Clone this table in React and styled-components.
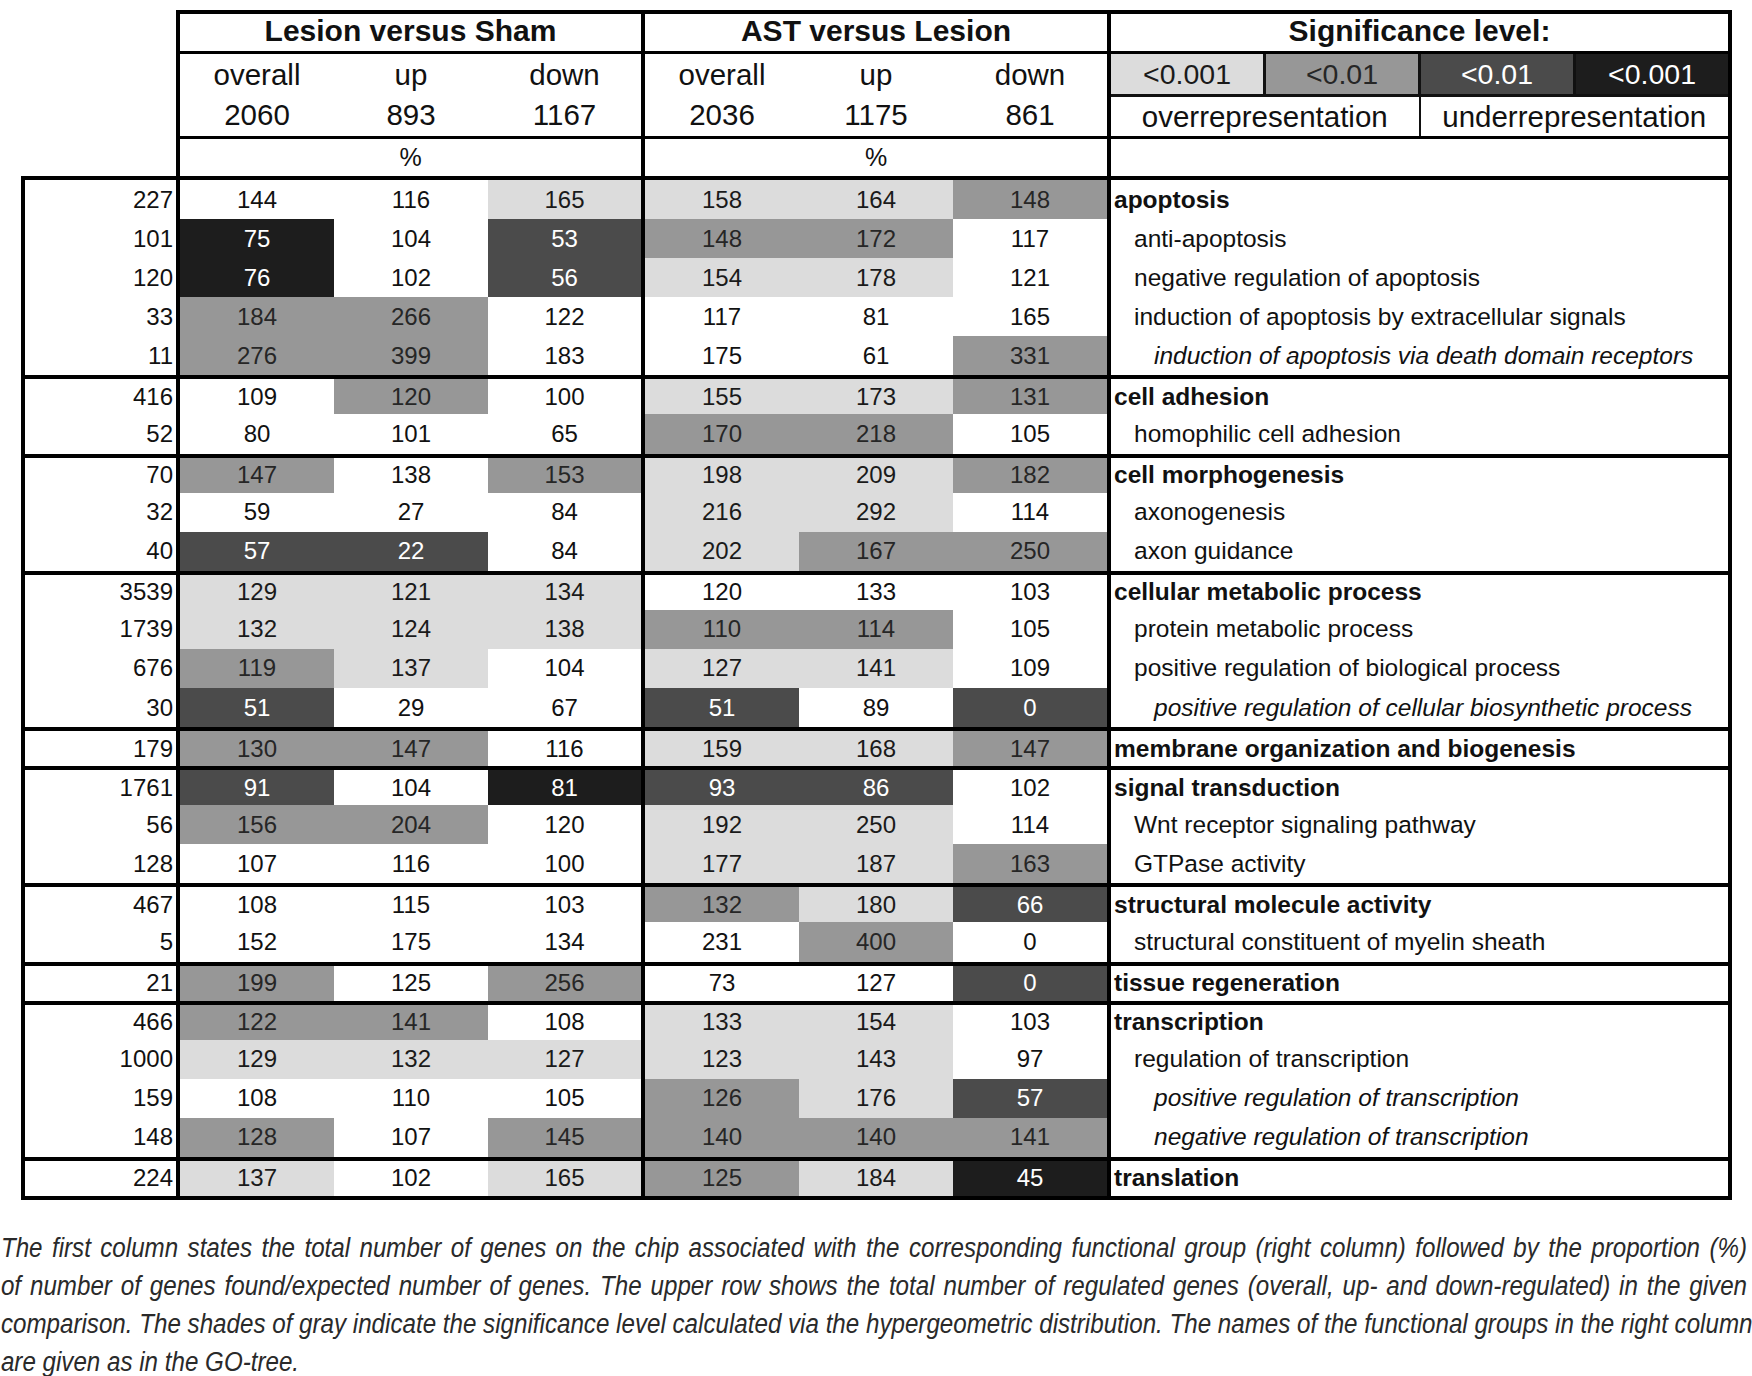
import React from 'react';
import styled, { createGlobalStyle, css } from 'styled-components';

const Global = createGlobalStyle`
  *, *::before, *::after { box-sizing: border-box; }
  html, body { margin: 0; padding: 0; background: #fff; }
  body { font-family: "Liberation Sans", Arial, sans-serif; color: #111; }
`;

const SHADE = {
  W: { bg: 'transparent', fg: '#111' },
  L: { bg: '#dcdcdc', fg: '#1a1a1a' },
  M: { bg: '#979797', fg: '#262626' },
  D: { bg: '#4b4b4b', fg: '#ffffff' },
  B: { bg: '#1d1d1d', fg: '#ffffff' },
};

const groups = [
  [
    [227, [144, 'W'], [116, 'W'], [165, 'L'], [158, 'L'], [164, 'L'], [148, 'M'], 'apoptosis', 0],
    [101, [75, 'B'], [104, 'W'], [53, 'D'], [148, 'M'], [172, 'M'], [117, 'W'], 'anti-apoptosis', 1],
    [120, [76, 'B'], [102, 'W'], [56, 'D'], [154, 'L'], [178, 'L'], [121, 'W'], 'negative regulation of apoptosis', 1],
    [33, [184, 'M'], [266, 'M'], [122, 'W'], [117, 'W'], [81, 'W'], [165, 'W'], 'induction of apoptosis by extracellular signals', 1],
    [11, [276, 'M'], [399, 'M'], [183, 'W'], [175, 'W'], [61, 'W'], [331, 'M'], 'induction of apoptosis via death domain receptors', 2],
  ],
  [
    [416, [109, 'W'], [120, 'M'], [100, 'W'], [155, 'L'], [173, 'L'], [131, 'M'], 'cell adhesion', 0],
    [52, [80, 'W'], [101, 'W'], [65, 'W'], [170, 'M'], [218, 'M'], [105, 'W'], 'homophilic cell adhesion', 1],
  ],
  [
    [70, [147, 'M'], [138, 'W'], [153, 'M'], [198, 'L'], [209, 'L'], [182, 'M'], 'cell morphogenesis', 0],
    [32, [59, 'W'], [27, 'W'], [84, 'W'], [216, 'L'], [292, 'L'], [114, 'W'], 'axonogenesis', 1],
    [40, [57, 'D'], [22, 'D'], [84, 'W'], [202, 'L'], [167, 'M'], [250, 'M'], 'axon guidance', 1],
  ],
  [
    [3539, [129, 'L'], [121, 'L'], [134, 'L'], [120, 'W'], [133, 'W'], [103, 'W'], 'cellular metabolic process', 0],
    [1739, [132, 'L'], [124, 'L'], [138, 'L'], [110, 'M'], [114, 'M'], [105, 'W'], 'protein metabolic process', 1],
    [676, [119, 'M'], [137, 'L'], [104, 'W'], [127, 'L'], [141, 'L'], [109, 'W'], 'positive regulation of biological process', 1],
    [30, [51, 'D'], [29, 'W'], [67, 'W'], [51, 'D'], [89, 'W'], [0, 'D'], 'positive regulation of cellular biosynthetic process', 2],
  ],
  [
    [179, [130, 'M'], [147, 'M'], [116, 'W'], [159, 'L'], [168, 'L'], [147, 'M'], 'membrane organization and biogenesis', 0],
  ],
  [
    [1761, [91, 'D'], [104, 'W'], [81, 'B'], [93, 'D'], [86, 'D'], [102, 'W'], 'signal transduction', 0],
    [56, [156, 'M'], [204, 'M'], [120, 'W'], [192, 'L'], [250, 'L'], [114, 'W'], 'Wnt receptor signaling pathway', 1],
    [128, [107, 'W'], [116, 'W'], [100, 'W'], [177, 'L'], [187, 'L'], [163, 'M'], 'GTPase activity', 1],
  ],
  [
    [467, [108, 'W'], [115, 'W'], [103, 'W'], [132, 'M'], [180, 'L'], [66, 'D'], 'structural molecule activity', 0],
    [5, [152, 'W'], [175, 'W'], [134, 'W'], [231, 'W'], [400, 'M'], [0, 'W'], 'structural constituent of myelin sheath', 1],
  ],
  [
    [21, [199, 'M'], [125, 'W'], [256, 'M'], [73, 'W'], [127, 'W'], [0, 'D'], 'tissue regeneration', 0],
  ],
  [
    [466, [122, 'M'], [141, 'M'], [108, 'W'], [133, 'L'], [154, 'L'], [103, 'W'], 'transcription', 0],
    [1000, [129, 'L'], [132, 'L'], [127, 'L'], [123, 'L'], [143, 'L'], [97, 'W'], 'regulation of transcription', 1],
    [159, [108, 'W'], [110, 'W'], [105, 'W'], [126, 'M'], [176, 'L'], [57, 'D'], 'positive regulation of transcription', 2],
    [148, [128, 'M'], [107, 'W'], [145, 'M'], [140, 'M'], [140, 'M'], [141, 'M'], 'negative regulation of transcription', 2],
  ],
  [
    [224, [137, 'L'], [102, 'W'], [165, 'L'], [125, 'M'], [184, 'L'], [45, 'B'], 'translation', 0],
  ],
];

const Page = styled.div`
  width: 1752px;
  height: 1376px;
  overflow: hidden;
  padding-top: 10px;
`;

/* ---------- header ---------- */
const Head = styled.div`
  margin-left: 176px;
  width: 1556px;
  border: 4px solid #000;
  border-bottom: none;
  display: flex;
`;

const Section = styled.div`
  width: ${(p) => p.$w}px;
  border-right: ${(p) => (p.$last ? 'none' : '4px solid #000')};
  display: flex;
  flex-direction: column;
`;

const TitleCell = styled.div`
  height: 40px;
  padding-bottom: 4px;
  border-bottom: 3px solid #000;
  display: flex;
  align-items: center;
  justify-content: center;
  font-weight: bold;
  font-size: 30px;
  color: #111;
`;

const SubRow = styled.div`
  height: 85px;
  border-bottom: 3px solid #000;
  display: grid;
  grid-template-columns: ${(p) => p.$cols};
`;

const SubCell = styled.div`
  display: flex;
  flex-direction: column;
  align-items: center;
  justify-content: center;
  font-size: 29.5px;
  line-height: 40px;
  color: #111;
`;

const PctRow = styled.div`
  height: 37px;
  display: flex;
  align-items: center;
  justify-content: center;
  font-size: 25px;
  color: #111;
`;

const LegendBox = styled.div`
  height: 85px;
  border-bottom: 3px solid #000;
  display: flex;
  flex-direction: column;
  background: #111;
  gap: 3px;
`;

const SwatchRow = styled.div`
  height: 40px;
  display: grid;
  grid-template-columns: repeat(4, 1fr);
  gap: 3px;
`;

const Swatch = styled.div`
  background: ${(p) => SHADE[p.$level].bg};
  color: ${(p) => SHADE[p.$level].fg};
  display: flex;
  align-items: center;
  justify-content: center;
  font-size: 28.5px;
`;

const RepRow = styled.div`
  flex: 1;
  display: grid;
  grid-template-columns: 1fr 1fr;
  gap: 2px;
`;

const RepCell = styled.div`
  background: #fff;
  display: flex;
  align-items: center;
  justify-content: center;
  font-size: 29.5px;
  color: #111;
`;

/* ---------- data ---------- */
const DataBox = styled.div`
  margin-left: 21px;
  width: 1711px;
  border: 4px solid #000;
`;

const Group = styled.div`
  display: grid;
  grid-template-columns: 155px 154px 154px 157px 154px 154px 158px 617px;
  grid-auto-rows: 39.08px;
  ${(p) =>
    !p.$first &&
    css`
      & > :nth-child(-n + 8) {
        border-top: 4px solid #000;
      }
    `}
`;

const CountCell = styled.div`
  border-right: 4px solid #000;
  display: flex;
  align-items: center;
  justify-content: flex-end;
  padding-right: 3px;
  font-size: 24px;
  color: #111;
`;

const ValCell = styled.div`
  background: ${(p) => SHADE[p.$level].bg};
  color: ${(p) => SHADE[p.$level].fg};
  border-right: ${(p) => (p.$edge ? '4px solid #000' : 'none')};
  display: flex;
  align-items: center;
  justify-content: center;
  font-size: 24px;
`;

const LabelCell = styled.div`
  display: flex;
  align-items: center;
  padding-left: ${(p) => 3 + p.$indent * 20}px;
  font-size: 24.5px;
  font-weight: ${(p) => (p.$indent === 0 ? 'bold' : 'normal')};
  font-style: ${(p) => (p.$indent === 2 ? 'italic' : 'normal')};
  color: #111;
  white-space: nowrap;
`;

/* ---------- caption ---------- */
const Caption = styled.div`
  margin-top: 29px;
  font-style: italic;
  font-size: 27px;
  line-height: 38px;
  color: #2a2a2a;
`;

const CapLine = styled.div`
  width: ${(p) => (p.$last ? 'auto' : '1952px')};
  white-space: nowrap;
  text-align: ${(p) => (p.$last ? 'left' : 'justify')};
  text-align-last: ${(p) => (p.$last ? 'left' : 'justify')};
  padding-left: 1px;
  transform: scaleX(0.895);
  transform-origin: left center;
`;

const lesionCols = [
  ['overall', 2060],
  ['up', 893],
  ['down', 1167],
];
const astCols = [
  ['overall', 2036],
  ['up', 1175],
  ['down', 861],
];

export default function App() {
  return (
    <Page>
      <Global />
      <Head>
        <Section $w={465}>
          <TitleCell>Lesion versus Sham</TitleCell>
          <SubRow $cols="154px 154px 153px">
            {lesionCols.map(([l, n]) => (
              <SubCell key={l}>
                <span>{l}</span>
                <span>{n}</span>
              </SubCell>
            ))}
          </SubRow>
          <PctRow>%</PctRow>
        </Section>
        <Section $w={466}>
          <TitleCell>AST versus Lesion</TitleCell>
          <SubRow $cols="154px 154px 154px">
            {astCols.map(([l, n]) => (
              <SubCell key={l}>
                <span>{l}</span>
                <span>{n}</span>
              </SubCell>
            ))}
          </SubRow>
          <PctRow>%</PctRow>
        </Section>
        <Section $w={617} $last>
          <TitleCell>Significance level:</TitleCell>
          <LegendBox>
            <SwatchRow>
              <Swatch $level="L">&lt;0.001</Swatch>
              <Swatch $level="M">&lt;0.01</Swatch>
              <Swatch $level="D">&lt;0.01</Swatch>
              <Swatch $level="B">&lt;0.001</Swatch>
            </SwatchRow>
            <RepRow>
              <RepCell>overrepresentation</RepCell>
              <RepCell>underrepresentation</RepCell>
            </RepRow>
          </LegendBox>
          <PctRow />
        </Section>
      </Head>
      <DataBox>
        {groups.map((rows, gi) => (
          <Group key={gi} $first={gi === 0}>
            {rows.map((r, ri) => (
              <React.Fragment key={ri}>
                <CountCell>{r[0]}</CountCell>
                {r.slice(1, 7).map(([v, lv], ci) => (
                  <ValCell key={ci} $level={lv} $edge={ci === 2 || ci === 5}>
                    {v}
                  </ValCell>
                ))}
                <LabelCell $indent={r[8]}>{r[7]}</LabelCell>
              </React.Fragment>
            ))}
          </Group>
        ))}
      </DataBox>
      <Caption>
        <CapLine>
          The first column states the total number of genes on the chip associated with the corresponding functional group (right column) followed by the proportion (%)
        </CapLine>
        <CapLine>
          of number of genes found/expected number of genes. The upper row shows the total number of regulated genes (overall, up- and down-regulated) in the given
        </CapLine>
        <CapLine>
          comparison. The shades of gray indicate the significance level calculated via the hypergeometric distribution. The names of the functional groups in the right column
        </CapLine>
        <CapLine $last>are given as in the GO-tree.</CapLine>
      </Caption>
    </Page>
  );
}
